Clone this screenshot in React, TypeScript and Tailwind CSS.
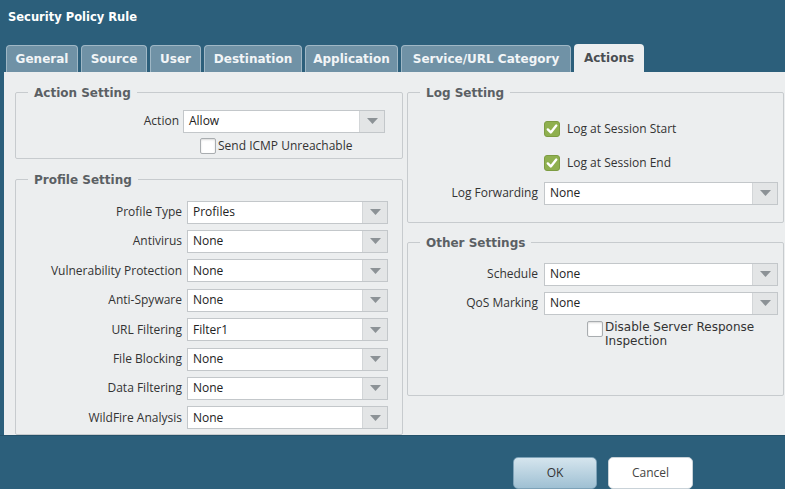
const tabs = [
  { name: "General", w: "w-[72px]" },
  { name: "Source", w: "w-[66px]" },
  { name: "User", w: "w-[51px]" },
  { name: "Destination", w: "w-[98px]" },
  { name: "Application", w: "w-[93px]" },
  { name: "Service/URL Category", w: "w-[170px]" },
];

const profileRows = [
  { label: "Profile Type", value: "Profiles" },
  { label: "Antivirus", value: "None" },
  { label: "Vulnerability Protection", value: "None" },
  { label: "Anti-Spyware", value: "None" },
  { label: "URL Filtering", value: "Filter1" },
  { label: "File Blocking", value: "None" },
  { label: "Data Filtering", value: "None" },
  { label: "WildFire Analysis", value: "None" },
];

const Select = ({ value, width }: { value: string; width: string }) => (
  <div className={`flex h-[23px] ${width} border border-[#c3c7ca] bg-white`}>
    <span className="flex flex-1 items-center pl-[5px] text-[#222]">{value}</span>
    <span className="flex w-[25px] items-center justify-center border-l border-[#d3d6d8] bg-[#e3e5e6]">
      <svg width="11" height="6" viewBox="0 0 11 6">
        <path d="M0 0 H11 L5.5 6 Z" fill="#8c9296" />
      </svg>
    </span>
  </div>
);

const Row = ({
  label,
  value,
  labelW,
  selectW,
  gap,
}: {
  label: string;
  value: string;
  labelW: string;
  selectW: string;
  gap: string;
}) => (
  <div className={`flex items-center ${gap}`}>
    <span className={`${labelW} text-right text-[#333]`}>{label}</span>
    <Select value={value} width={selectW} />
  </div>
);

const GreenCheck = () => (
  <svg width="16" height="16" viewBox="0 0 16 16">
    <rect x="0.5" y="0.5" width="15" height="15" rx="2.5" fill="#8fb04f" stroke="#7d9c42" />
    <path d="M3.8 8.4 L6.8 11.4 L12.3 4.6" fill="none" stroke="#ffffff" strokeWidth="2.4" strokeLinecap="round" strokeLinejoin="round" />
  </svg>
);

const EmptyCheck = () => (
  <span className="block h-[16px] w-[16px] rounded-[2px] border border-[#a9adb0] bg-white shadow-[inset_0_1px_2px_rgba(0,0,0,0.15)]" />
);

const Legend = ({ children }: { children: string }) => (
  <legend className="ml-[12px] px-[6px] font-['DejaVu_Sans',sans-serif] text-[12px] leading-[16px] font-bold text-[#5b6064]">
    {children}
  </legend>
);

export default function App() {
  return (
    <div className="flex h-[489px] w-[785px] flex-col overflow-hidden bg-[#2c5f7b] font-['Open_Sans',sans-serif] text-[12px] leading-[16px]">
      {/* Title */}
      <div className="h-[44px] pt-[9px] pl-[8px] font-['DejaVu_Sans',sans-serif] text-[11.5px] font-bold text-white">
        Security Policy Rule
      </div>

      {/* Tabs */}
      <div className="flex h-[28px] items-end gap-[3px] pl-[6px]">
        {tabs.map((t) => (
          <div
            key={t.name}
            className={`flex h-[27px] ${t.w} items-center justify-center rounded-t-[4px] border border-b-0 border-[#9fb7c5] bg-[#7092a6] font-['DejaVu_Sans',sans-serif] text-[12px] font-bold text-[#f2f5f7]`}
          >
            {t.name}
          </div>
        ))}
        <div className="flex h-[28px] w-[70px] items-center justify-center rounded-t-[4px] bg-[#eceeef] font-['DejaVu_Sans',sans-serif] text-[12px] font-bold text-[#4a4e52]">
          Actions
        </div>
      </div>

      {/* Panel */}
      <div className="ml-[4px] flex h-[368px] gap-[4px] overflow-hidden bg-[#eceeef] pt-[13px] pl-[11px]">
        {/* Left column */}
        <div className="flex w-[388px] shrink-0 flex-col">
          <fieldset className="rounded-[2px] border border-[#c7cbce] pt-[9px] pb-[4px]">
            <Legend>Action Setting</Legend>
            <Row label="Action" value="Allow" labelW="w-[163px]" selectW="w-[202px]" gap="gap-[4px]" />
            <div className="mt-[5px] ml-[184px] flex items-center gap-[2px]">
              <EmptyCheck />
              <span className="text-[#333]">Send ICMP Unreachable</span>
            </div>
          </fieldset>

          <fieldset className="mt-[13px] rounded-[2px] border border-[#c7cbce] pt-[13px] pb-[5px]">
            <Legend>Profile Setting</Legend>
            <div className="flex flex-col gap-[6.4px]">
              {profileRows.map((r) => (
                <Row key={r.label} label={r.label} value={r.value} labelW="w-[166px]" selectW="w-[201px]" gap="gap-[5px]" />
              ))}
            </div>
          </fieldset>
        </div>

        {/* Right column */}
        <div className="flex w-[377px] shrink-0 flex-col">
          <fieldset className="rounded-[2px] border border-[#c7cbce] pt-[20px] pb-[17px]">
            <Legend>Log Setting</Legend>
            <div className="ml-[136px] flex items-center gap-[7px]">
              <GreenCheck />
              <span className="text-[#333]">Log at Session Start</span>
            </div>
            <div className="mt-[18px] ml-[136px] flex items-center gap-[7px]">
              <GreenCheck />
              <span className="text-[#333]">Log at Session End</span>
            </div>
            <div className="mt-[11px]">
              <Row label="Log Forwarding" value="None" labelW="w-[130px]" selectW="w-[234px]" gap="gap-[6px]" />
            </div>
          </fieldset>

          <fieldset className="mt-[12px] rounded-[2px] border border-[#c7cbce] pt-[12px] pb-[47px]">
            <Legend>Other Settings</Legend>
            <div className="flex flex-col gap-[6px]">
              <Row label="Schedule" value="None" labelW="w-[130px]" selectW="w-[234px]" gap="gap-[6px]" />
              <Row label="QoS Marking" value="None" labelW="w-[130px]" selectW="w-[234px]" gap="gap-[6px]" />
            </div>
            <div className="mt-[6px] ml-[179px] flex items-start gap-[2px]">
              <EmptyCheck />
              <span className="-mt-[1px] font-['DejaVu_Sans',sans-serif] text-[12px] leading-[14px] text-[#333]">
                Disable Server Response
                <br />
                Inspection
              </span>
            </div>
          </fieldset>
        </div>
      </div>

      {/* Footer buttons */}
      <div className="flex gap-[11px] border-t border-[#24516a] pt-[21px] pl-[513px]">
        <button className="h-[32px] w-[84px] rounded-[5px] border border-[#7da2b8] bg-gradient-to-b from-[#d5e5ee] to-[#9fc0d3] text-[12px] text-[#333]">
          OK
        </button>
        <button className="h-[32px] w-[85px] rounded-[5px] border border-[#c9d2d8] bg-white text-[12px] text-[#444]">
          Cancel
        </button>
      </div>
    </div>
  );
}
